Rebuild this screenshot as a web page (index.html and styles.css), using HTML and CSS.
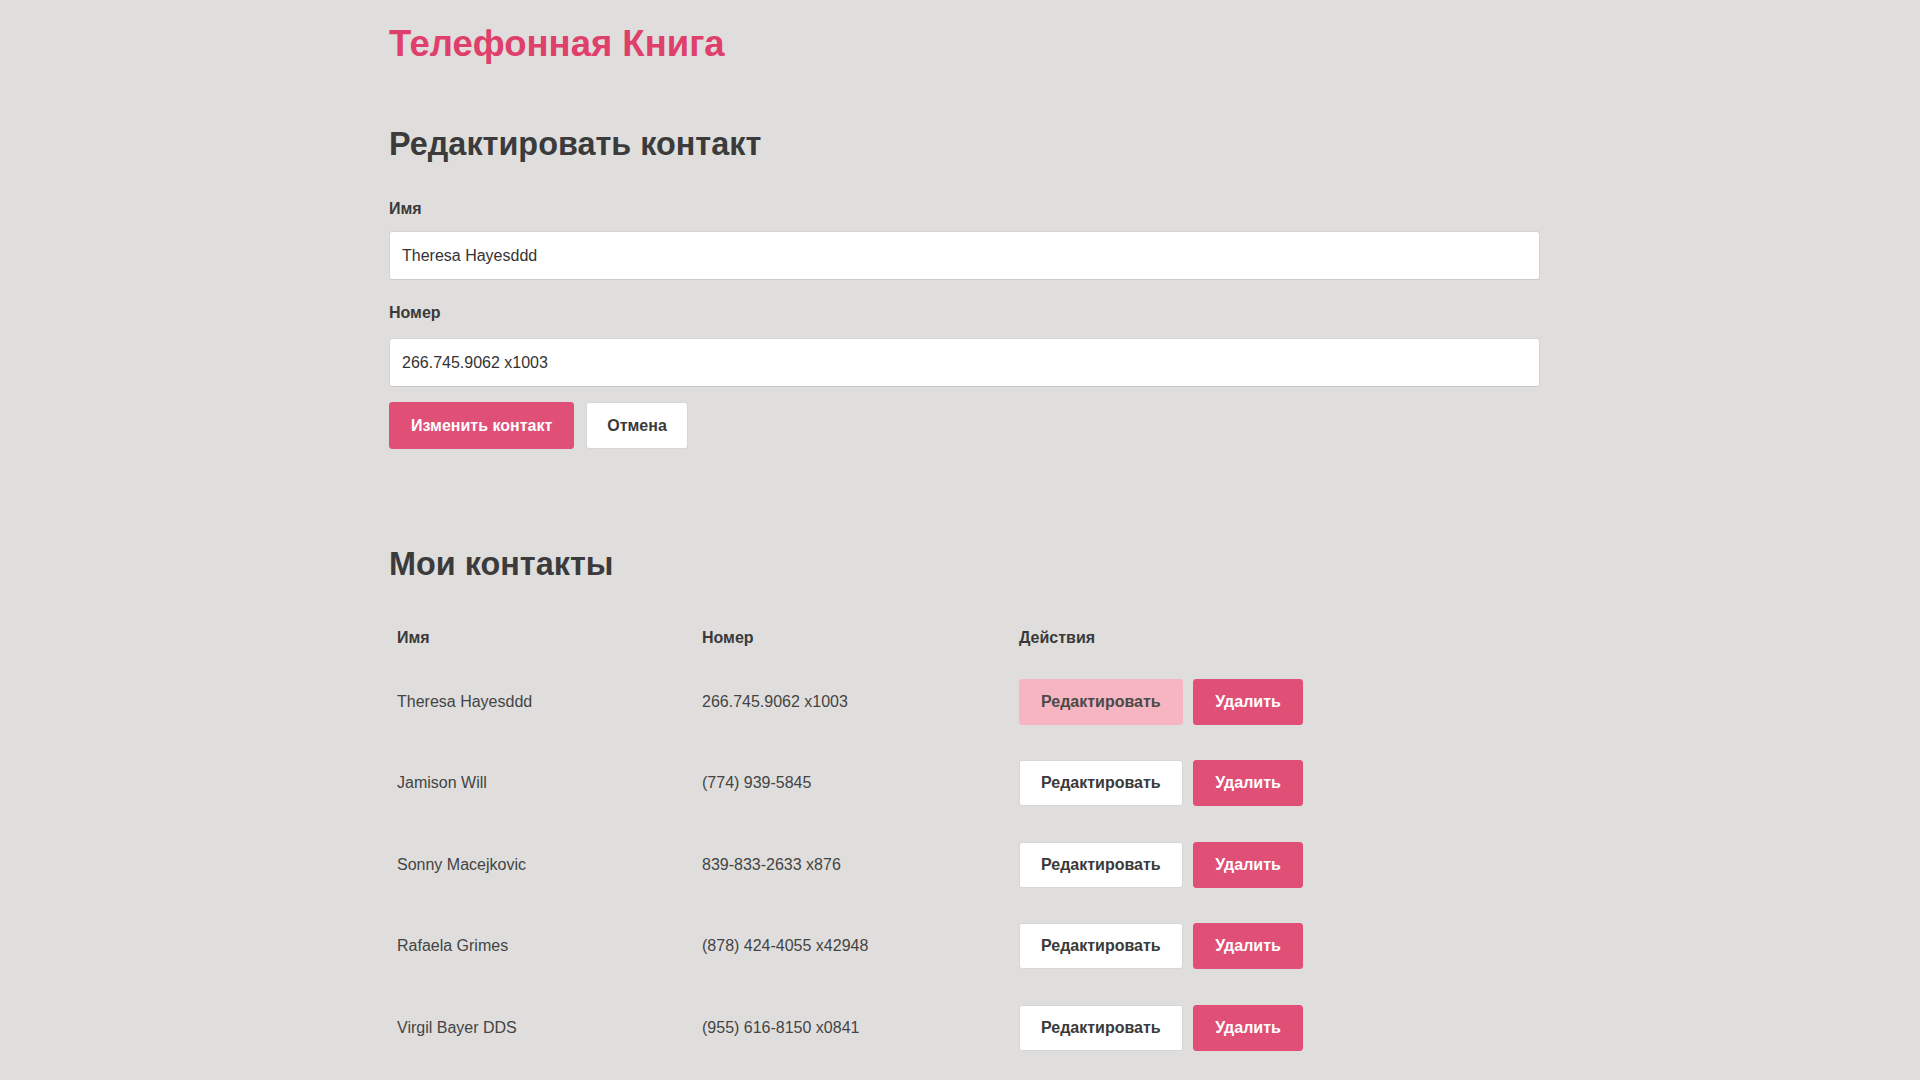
FILE: index.html
```html
<!DOCTYPE html>
<html lang="ru">
<head>
<meta charset="utf-8">
<title>Телефонная Книга</title>
<link rel="stylesheet" href="styles.css">
</head>
<body>
<div class="container">
  <h1 class="title">Телефонная Книга</h1>

  <section class="edit">
    <h2 class="heading">Редактировать контакт</h2>
    <form class="form">
      <label class="label" for="name">Имя</label>
      <input class="input" id="name" type="text" value="Theresa Hayesddd">
      <label class="label label-second" for="phone">Номер</label>
      <input class="input" id="phone" type="text" value="266.745.9062 x1003">
      <div class="form-actions">
        <button type="button" class="btn btn-primary">Изменить контакт</button>
        <button type="button" class="btn btn-default btn-cancel">Отмена</button>
      </div>
    </form>
  </section>

  <section class="contacts">
    <h2 class="heading">Мои контакты</h2>
    <table class="table">
      <colgroup>
        <col class="col-name">
        <col class="col-phone">
        <col class="col-actions">
      </colgroup>
      <thead>
        <tr><th>Имя</th><th>Номер</th><th>Действия</th></tr>
      </thead>
      <tbody>
        <tr>
          <td>Theresa Hayesddd</td>
          <td>266.745.9062 x1003</td>
          <td><div class="actions"><button type="button" class="btn btn-active">Редактировать</button><button type="button" class="btn btn-primary btn-del">Удалить</button></div></td>
        </tr>
        <tr>
          <td>Jamison Will</td>
          <td>(774) 939-5845</td>
          <td><div class="actions"><button type="button" class="btn btn-default btn-edit">Редактировать</button><button type="button" class="btn btn-primary btn-del">Удалить</button></div></td>
        </tr>
        <tr>
          <td>Sonny Macejkovic</td>
          <td>839-833-2633 x876</td>
          <td><div class="actions"><button type="button" class="btn btn-default btn-edit">Редактировать</button><button type="button" class="btn btn-primary btn-del">Удалить</button></div></td>
        </tr>
        <tr>
          <td>Rafaela Grimes</td>
          <td>(878) 424-4055 x42948</td>
          <td><div class="actions"><button type="button" class="btn btn-default btn-edit">Редактировать</button><button type="button" class="btn btn-primary btn-del">Удалить</button></div></td>
        </tr>
        <tr>
          <td>Virgil Bayer DDS</td>
          <td>(955) 616-8150 x0841</td>
          <td><div class="actions"><button type="button" class="btn btn-default btn-edit">Редактировать</button><button type="button" class="btn btn-primary btn-del">Удалить</button></div></td>
        </tr>
      </tbody>
    </table>
  </section>
</div>
</body>
</html>
```
FILE: styles.css
```css
* { box-sizing: border-box; }

html, body {
  margin: 0;
  padding: 0;
  background: #dfdedd;
  font-family: "Liberation Sans", Arial, sans-serif;
  color: #3a3a3a;
  font-size: 16px;
}

.container {
  width: 1151px;
  margin-left: 389px;
}

.title {
  margin: 22px 0 0;
  font-size: 36.5px;
  line-height: 44px;
  font-weight: bold;
  color: #df3f6b;
}

.heading {
  margin: 0;
  font-size: 32.4px;
  line-height: 40px;
  font-weight: bold;
  color: #3b3b3b;
}

.edit { margin-top: 58px; }

.form {
  display: flex;
  flex-direction: column;
  margin-top: 35px;
}

.label {
  display: block;
  font-weight: bold;
  font-size: 16px;
  line-height: 20px;
  color: #3a3a3a;
  margin-bottom: 12px;
}

.label-second { margin-top: 23px; margin-bottom: 15px; }

.input {
  width: 100%;
  height: 49px;
  border: 1px solid #d4d4d4;
  border-bottom-color: #c9c9c9;
  border-radius: 3px;
  background: #ffffff;
  padding: 0 12px;
  font-family: "Liberation Sans", Arial, sans-serif;
  font-size: 16px;
  color: #333333;
  outline: none;
}

.form-actions {
  display: flex;
  gap: 12px;
  margin-top: 15px;
}

.btn {
  height: 47px;
  padding: 0 21px;
  border-radius: 3px;
  border: 1px solid transparent;
  font-family: "Liberation Sans", Arial, sans-serif;
  font-size: 16px;
  font-weight: bold;
  cursor: pointer;
}

.btn-cancel { padding: 0 20px; }

.btn-primary {
  background: #e04f76;
  border-color: #e04f76;
  color: #ffffff;
}

.btn-default {
  background: #ffffff;
  border-color: #d6d6d6;
  color: #3a3a3a;
}

.btn-active {
  background: #f7b5c1;
  border-color: #f7b5c1;
  color: #4a4a4a;
}

.contacts { margin-top: 95px; }

.table {
  width: 100%;
  margin-top: 30px;
  border-collapse: collapse;
  table-layout: fixed;
}

.col-name { width: 305px; }
.col-phone { width: 317px; }

.table th {
  text-align: left;
  font-weight: bold;
  font-size: 16px;
  line-height: 18px;
  padding: 15px 8px 14px;
  color: #3a3a3a;
}

.table td {
  padding: 17.75px 8px;
  font-size: 16px;
  line-height: 18px;
  color: #444444;
  vertical-align: middle;
}

.actions {
  display: flex;
  gap: 10px;
}

.actions .btn {
  height: 46px;
  padding: 0 21px;
}

.actions .btn-del { padding: 0 21.5px; }
```
